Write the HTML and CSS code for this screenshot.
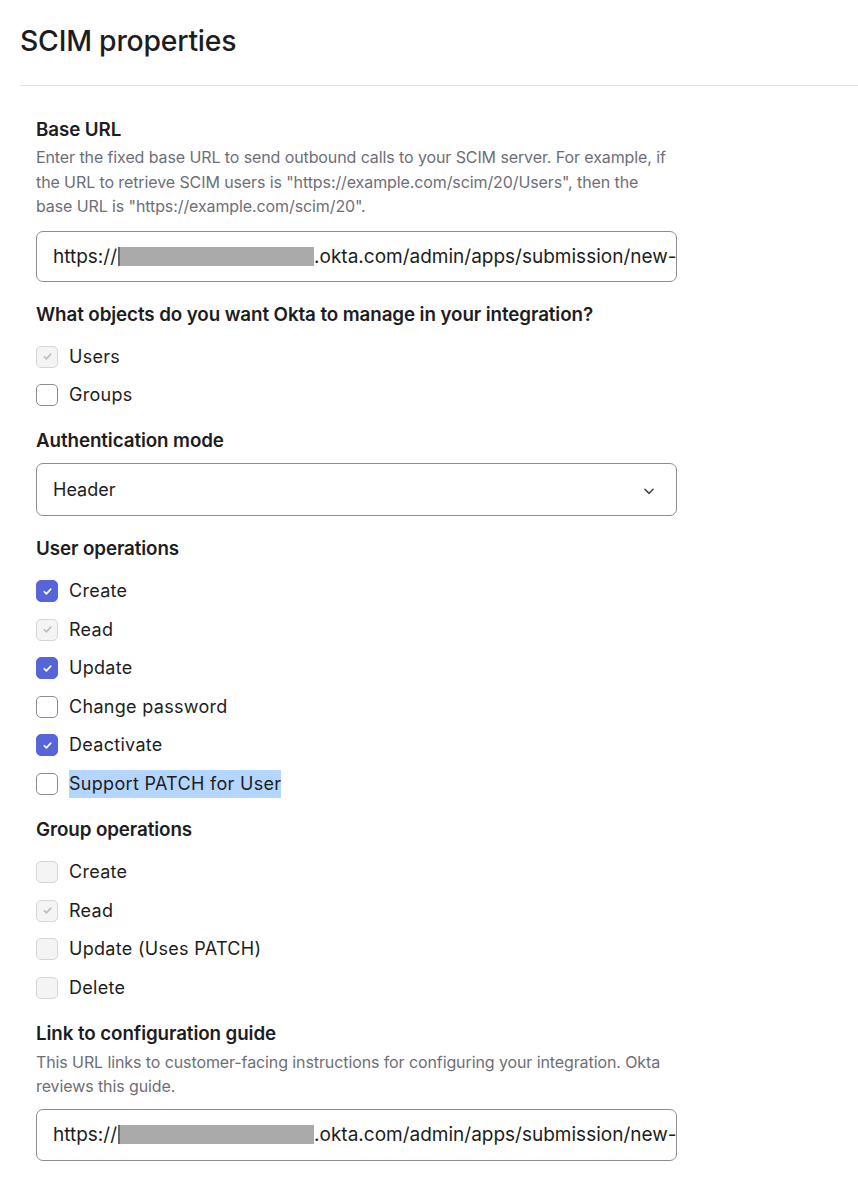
FILE: index.html
```html
<!DOCTYPE html>
<html lang="en">
<head>
<meta charset="utf-8">
<title>SCIM properties</title>
<link rel="stylesheet" href="styles.css">
</head>
<body>
<main class="page">
  <h1 class="title">SCIM properties</h1>
  <hr class="divider">

  <form class="form">
    <section class="field field-input">
      <h2 class="label">Base URL</h2>
      <p class="hint">Enter the fixed base URL to send outbound calls to your SCIM server. For example, if the URL to retrieve SCIM users is "https://example.com/scim/20/Users", then the base URL is "https://example.com/scim/20".</p>
      <div class="input"><span class="url">https://<span class="redact"></span>.okta.com/admin/apps/submission/new-</span></div>
    </section>

    <section class="field">
      <h2 class="label">What objects do you want Okta to manage in your integration?</h2>
      <ul class="checks">
        <li class="check"><span class="box box-disabled-on"><svg viewBox="0 0 12 12"><path d="M3 6.2l2 2 4-4.4"/></svg></span><span class="text">Users</span></li>
        <li class="check"><span class="box"></span><span class="text">Groups</span></li>
      </ul>
    </section>

    <section class="field field-input">
      <h2 class="label">Authentication mode</h2>
      <div class="input select"><span>Header</span><svg class="chev" viewBox="0 0 12 12"><path d="M2.5 4.5L6 8l3.5-3.5"/></svg></div>
    </section>

    <section class="field">
      <h2 class="label">User operations</h2>
      <ul class="checks">
        <li class="check"><span class="box box-on"><svg viewBox="0 0 12 12"><path d="M3 6.2l2 2 4-4.4"/></svg></span><span class="text">Create</span></li>
        <li class="check"><span class="box box-disabled-on"><svg viewBox="0 0 12 12"><path d="M3 6.2l2 2 4-4.4"/></svg></span><span class="text">Read</span></li>
        <li class="check"><span class="box box-on"><svg viewBox="0 0 12 12"><path d="M3 6.2l2 2 4-4.4"/></svg></span><span class="text">Update</span></li>
        <li class="check"><span class="box"></span><span class="text">Change password</span></li>
        <li class="check"><span class="box box-on"><svg viewBox="0 0 12 12"><path d="M3 6.2l2 2 4-4.4"/></svg></span><span class="text">Deactivate</span></li>
        <li class="check"><span class="box"></span><span class="text selected">Support PATCH for User</span></li>
      </ul>
    </section>

    <section class="field">
      <h2 class="label">Group operations</h2>
      <ul class="checks">
        <li class="check"><span class="box box-disabled"></span><span class="text">Create</span></li>
        <li class="check"><span class="box box-disabled-on"><svg viewBox="0 0 12 12"><path d="M3 6.2l2 2 4-4.4"/></svg></span><span class="text">Read</span></li>
        <li class="check"><span class="box box-disabled"></span><span class="text">Update (Uses PATCH)</span></li>
        <li class="check"><span class="box box-disabled"></span><span class="text">Delete</span></li>
      </ul>
    </section>

    <section class="field field-input">
      <h2 class="label">Link to configuration guide</h2>
      <p class="hint hint-tight">This URL links to customer-facing instructions for configuring your integration. Okta reviews this guide.</p>
      <div class="input input-tall"><span class="url">https://<span class="redact"></span>.okta.com/admin/apps/submission/new-</span></div>
    </section>
  </form>
</main>
</body>
</html>
```

FILE: styles.css
```css
* {
  box-sizing: border-box;
}

html, body {
  margin: 0;
  padding: 0;
  background: #ffffff;
}

body {
  font-family: Inter, "Noto Sans", sans-serif;
  color: #1d1d21;
}

.page {
  padding: 23px 0 0 20px;
}

.title {
  margin: 0;
  font-size: 28.3px;
  font-weight: 500;
  line-height: 36px;
  letter-spacing: -0.2px;
  color: #1d1d21;
}

.divider {
  margin: 26px 0 0 0;
  border: 0;
  border-top: 1px solid #e1e1e4;
}

.form {
  padding: 31px 0 0 16px;
  width: 657px;
}

.field {
  margin-bottom: 19px;
}

.field-input {
  margin-bottom: 20px;
}

.label {
  margin: 0;
  font-size: 18.8px;
  font-weight: 600;
  line-height: 26px;
  color: #1d1d21;
  letter-spacing: -0.1px;
}

.hint {
  margin: 2px 0 12px 0;
  font-size: 16px;
  line-height: 24.5px;
  color: #6e6e78;
  letter-spacing: -0.1px;
}

.hint-tight {
  margin: 3px 0 10px 0;
}

.input {
  display: flex;
  align-items: center;
  width: 641px;
  height: 51px;
  padding: 0 16px;
  border: 1px solid #8c8c96;
  border-radius: 7px;
  font-size: 18px;
  color: #1d1d21;
  overflow: hidden;
  white-space: nowrap;
}

.input-tall {
  height: 52px;
}

.url {
  display: flex;
  align-items: center;
  font-size: 19px;
}

.redact {
  display: inline-block;
  width: 196px;
  height: 19px;
  margin-left: 1px;
  background: #aaaaaa;
  border-left: 2px solid #6a6a6a;
}

.select {
  margin-top: 9px;
  height: 53px;
  justify-content: space-between;
}

.chev {
  width: 14px;
  height: 14px;
  margin-right: 4px;
  margin-top: 2px;
  fill: none;
  stroke: #4a4a52;
  stroke-width: 1.4;
  stroke-linecap: round;
  stroke-linejoin: round;
}

.checks {
  list-style: none;
  margin: 15px 0 0 0;
  padding: 0;
  display: flex;
  flex-direction: column;
  gap: 10.6px;
}

.check {
  display: flex;
  align-items: center;
  gap: 11px;
  height: 28px;
  font-size: 18px;
  color: #1d1d21;
}

.box {
  flex: none;
  display: flex;
  align-items: center;
  justify-content: center;
  width: 22px;
  height: 22px;
  border: 1px solid #8c8c96;
  border-radius: 5px;
  background: #ffffff;
}

.box svg {
  width: 13px;
  height: 13px;
  fill: none;
  stroke: #ffffff;
  stroke-width: 1.5;
  stroke-linecap: round;
  stroke-linejoin: round;
}

.box-on {
  background: #5865d9;
  border-color: #5865d9;
}

.box-disabled,
.box-disabled-on {
  background: #f4f4f5;
  border-color: #d6d6da;
}

.box-disabled-on svg {
  stroke: #bdbdc2;
}

.text {
  line-height: 28px;
  letter-spacing: 0.3px;
}

.selected {
  background: #b4d5fe;
}
```
